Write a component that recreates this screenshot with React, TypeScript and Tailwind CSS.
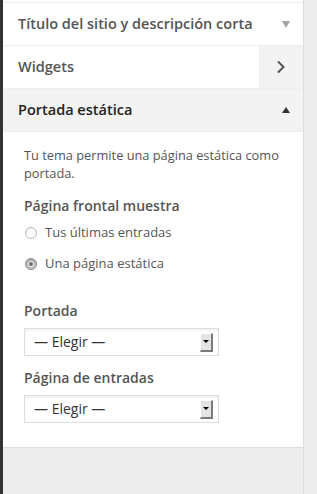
import React from "react";

const font = { fontFamily: '"Open Sans", "Noto Sans", sans-serif' };

function Radio({ checked }: { checked?: boolean }) {
  if (checked) {
    return (
      <span className="w-[12px] h-[12px] rounded-full border border-[#8c8c8c] bg-[#c8c8c8] flex items-center justify-center shadow-[inset_0_1px_2px_rgba(0,0,0,0.25)]">
        <span className="w-[6px] h-[6px] rounded-full bg-[#6e6e6e] border border-[#f0f0f0]" />
      </span>
    );
  }
  return (
    <span className="w-[12px] h-[12px] rounded-full border border-[#b4b9be] bg-white shadow-[inset_0_1px_2px_rgba(0,0,0,0.07)]" />
  );
}

function Select() {
  return (
    <div className="w-[195px] h-[28px] border border-[#dddddd] bg-white flex items-center justify-between pl-[9px] pr-[5px] shadow-[inset_0_2px_2px_rgba(0,0,0,0.05)]">
      <span className="text-[14px] text-[#333] leading-[20px]">— Elegir —</span>
      <span className="w-[13px] h-[19px] bg-[#e4e4e4] border-t border-l border-t-white border-l-white border-r-2 border-b-2 border-r-[#7a7a7a] border-b-[#7a7a7a] flex items-center justify-center">
        <span className="w-0 h-0 border-l-[3px] border-r-[3px] border-t-[3px] border-l-transparent border-r-transparent border-t-black" />
      </span>
    </div>
  );
}

export default function App() {
  return (
    <div className="w-[317px] h-[494px] flex bg-[#ececec] overflow-hidden" style={font}>
      <div className="w-[3px] bg-[#333333] shrink-0" />
      <div className="w-[301px] shrink-0 border-r border-[#dddddd] flex flex-col">
        <div className="h-[3px] bg-white border-b border-[#eeeeee]" />
        <div className="h-[43px] bg-white border-b border-[#eeeeee] flex items-center justify-between pl-[15px] pr-[13px]">
          <span className="text-[14.5px] font-semibold text-[#555]">Título del sitio y descripción corta</span>
          <span className="w-0 h-0 border-l-[4px] border-r-[4px] border-t-[7px] border-l-transparent border-r-transparent border-t-[#a0a5aa]" />
        </div>
        <div className="h-[43px] bg-white border-b border-[#eeeeee] flex">
          <div className="flex-1 flex items-center pl-[15px]">
            <span className="text-[14.5px] font-semibold text-[#555]">Widgets</span>
          </div>
          <div className="w-[44px] bg-[#f3f3f3] border-l border-[#eeeeee] flex items-center justify-center">
            <svg width="10" height="14" viewBox="0 0 10 14" className="ml-[-2px]">
              <path d="M2 1.5 L7.5 7 L2 12.5" fill="none" stroke="#555" strokeWidth="2" />
            </svg>
          </div>
        </div>
        <div className="h-[43px] bg-[#f3f3f3] border-b border-[#eeeeee] flex items-center justify-between pl-[15px] pr-[13px]">
          <span className="text-[14.5px] font-semibold text-[#222]">Portada estática</span>
          <span className="w-0 h-0 border-l-[4px] border-r-[4px] border-b-[6px] border-l-transparent border-r-transparent border-b-[#333]" />
        </div>
        <div className="bg-white border-b border-[#dddddd] pl-[21px] pt-[14px] pb-[24px] flex flex-col">
          <p className="text-[12.8px] leading-[18px] text-[#555] w-[262px]">Tu tema permite una página estática como portada.</p>
          <div className="mt-[14px] text-[14px] leading-[20px] font-semibold text-[#555]">Página frontal muestra</div>
          <div className="mt-[7px] h-[20px] flex items-center gap-[8px] pl-[1px]">
            <Radio />
            <span className="text-[13px] text-[#555]">Tus últimas entradas</span>
          </div>
          <div className="mt-[11px] h-[20px] flex items-center gap-[8px] pl-[1px]">
            <Radio checked />
            <span className="text-[13px] text-[#555]">Una página estática</span>
          </div>
          <div className="mt-[27px] text-[14px] leading-[20px] font-semibold text-[#555]">Portada</div>
          <div className="mt-[7px]"><Select /></div>
          <div className="mt-[12px] text-[14px] leading-[20px] font-semibold text-[#555]">Página de entradas</div>
          <div className="mt-[7px]"><Select /></div>
        </div>
        <div className="flex-1 bg-[#ececec]" />
      </div>
      <div className="flex-1 bg-[#ececec]" />
    </div>
  );
}
